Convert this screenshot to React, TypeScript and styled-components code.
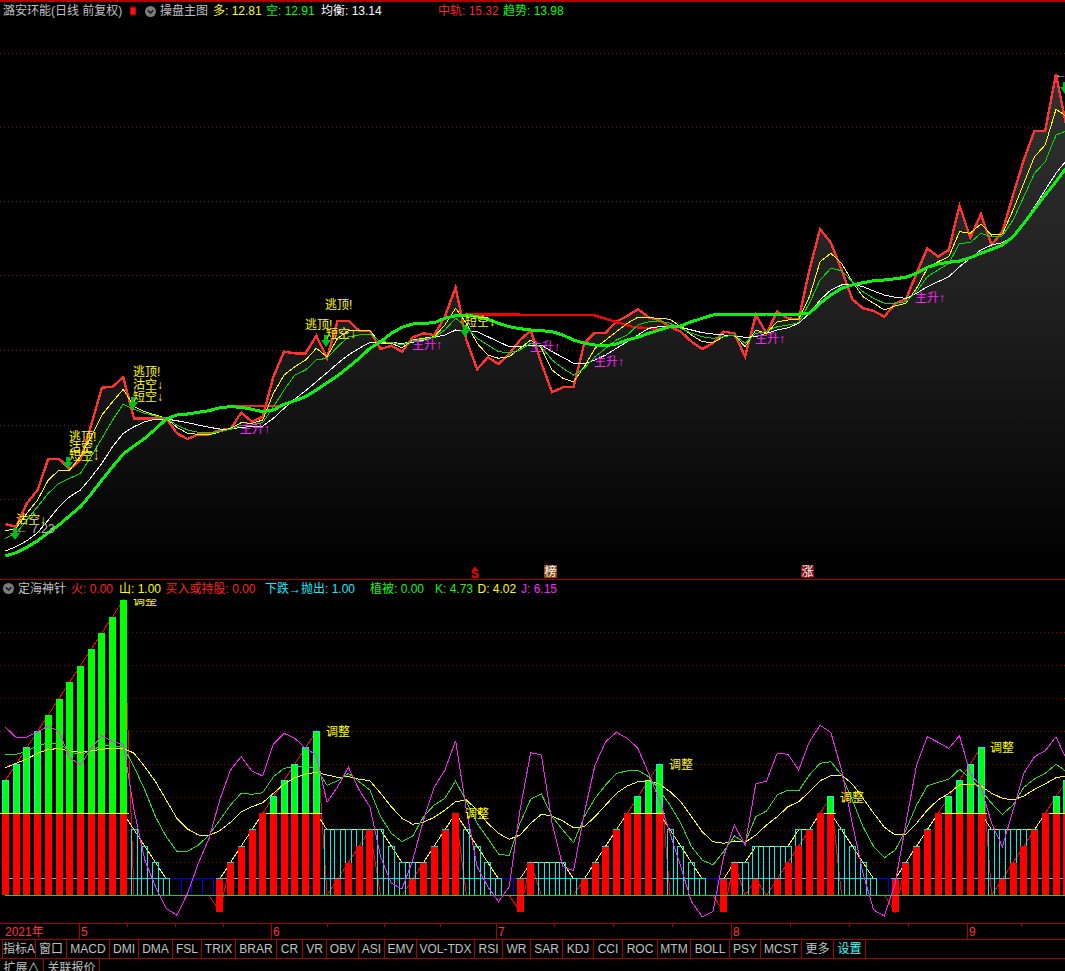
import styled, { createGlobalStyle } from "styled-components"

const GlobalStyle = createGlobalStyle`
html, body {
  margin: 0;
  padding: 0;
  background: #000;
}
* {
  box-sizing: border-box;
}
`

const FONT = `"Liberation Sans", "Noto Sans CJK SC", sans-serif`
const RULE = "#a80000"

const Screen = styled.div`
width: 1065px;
height: 971px;
overflow: hidden;
display: flex;
flex-direction: column;
background: #000;
border-top: 2px solid #b00000;
font-family: ${FONT};
font-size: 12px;
color: #c0c0c0;`
const Panel = styled.section<{ $ruled?: boolean }>`
display: flex;
flex-direction: column;
flex: 0 0 auto;
border-top: ${(p) => (p.$ruled ? `1px solid ${RULE}` : "none")};`
const Legend = styled.div<{ $h: number; $pb?: number }>`
height: ${(p) => p.$h}px;
padding-bottom: ${(p) => p.$pb ?? 0}px;
display: flex;
align-items: center;
white-space: nowrap;
overflow: hidden;`
const Reading = styled.span<{ $c: string; $w: number; $pad?: number }>`
flex: 0 0 ${(p) => p.$w}px;
width: ${(p) => p.$w}px;
padding-left: ${(p) => p.$pad ?? 0}px;
color: ${(p) => p.$c};
line-height: 14px;`
const Glyph = styled.svg<{ $ml: number; $mr: number }>`
flex: 0 0 auto;
margin-left: ${(p) => p.$ml}px;
margin-right: ${(p) => p.$mr}px;`
const Plot = styled.svg`
display: block;
flex: 0 0 auto;`
const Signal = styled.text`
font-family: ${FONT};
font-size: 12px;`
const Stamp = styled.text<{ $bold?: boolean }>`
font-family: ${FONT};
font-size: 12px;
font-weight: ${(p) => (p.$bold ? 700 : 400)};
text-anchor: middle;`
const Axis = styled.div`
height: 16px;
display: flex;
border-top: 1px solid ${RULE};`
const AxisCell = styled.div<{ $w: number; $major?: boolean }>`
flex: 0 0 ${(p) => p.$w}px;
height: ${(p) => (p.$major ? "15px" : "3px")};
border-left: 1px solid ${RULE};
padding-left: 1px;
color: #ff3232;
line-height: 16px;`
const YearCell = styled.div`
flex: 0 0 79px;
padding-left: 5px;
color: #ff3232;
line-height: 16px;`
const TabBar = styled.div`
height: 20px;
display: flex;
padding-left: 2px;
border-top: 1px solid ${RULE};
border-bottom: 1px solid ${RULE};`
const Tab = styled.div<{ $w: number; $active?: boolean }>`
flex: 0 0 ${(p) => p.$w}px;
border-right: 1px solid ${RULE};
color: ${(p) => (p.$active ? "#40ffff" : "#c0c0c0")};
text-align: center;
line-height: 18px;
white-space: nowrap;
overflow: hidden;
&:first-child {
  border-left: 1px solid ${RULE};
}`
const BottomBar = styled.div`
height: 12px;
display: flex;
overflow: hidden;`
const BottomTab = styled.div<{ $w: number }>`
flex: 0 0 ${(p) => p.$w}px;
border-right: 1px solid ${RULE};
padding-top: 1px;
text-align: center;
line-height: 16px;
white-space: nowrap;`

// y values read off the chart at 3x, each block with its own top offset
const seg = (offset: number, values: number[]) => values.map((v) => offset + v / 3)
const cx = (i: number) => 5.4 + 10.72 * i
const toPoints = (ys: number[]) => ys.map((y, i) => `${cx(i).toFixed(1)},${y.toFixed(1)}`).join(" ")

const closeLine = [
  ...seg(350, [522, 530, 460, 420, 326, 326, 358, 330, 225, 113, 110, 82, 205, 205, 205, 205, 250, 267, 253, 253, 240, 237, 188, 215, 200, 80]),
  ...seg(280, [215, 220, 220, 167, 234, 122, 122, 152, 152, 207, 197, 215, 172, 160, 165, 110, 22, 180, 268, 232, 252, 222, 180, 152, 250, 337, 322, 320, 190, 158, 158, 125, 108, 88, 112]),
  ...seg(60, [780, 800, 815, 845, 867, 850, 815, 820, 890, 765, 820, 755, 775, 778, 630, 508, 548, 630, 718, 745, 753, 770, 730, 718, 640, 565, 590, 570, 437, 533, 463, 555, 515, 405, 300, 212, 212, 42, 205]),
]
const fastLine = [
  ...seg(350, [543, 535, 490, 450, 390, 360, 360, 320, 260, 195, 155, 118, 170, 185, 195, 205, 232, 250, 253, 255, 245, 235, 218, 220, 210, 130]),
  ...seg(280, [285, 260, 240, 205, 230, 175, 152, 152, 152, 190, 190, 203, 180, 175, 170, 135, 85, 130, 190, 225, 235, 230, 205, 180, 205, 270, 295, 305, 260, 205, 180, 155, 130, 112, 113]),
  ...seg(60, [775, 778, 800, 825, 845, 848, 830, 825, 860, 810, 820, 785, 780, 778, 710, 605, 580, 610, 665, 710, 730, 750, 738, 730, 685, 625, 605, 590, 515, 520, 492, 525, 522, 450, 370, 290, 255, 148, 170]),
]
const midLine = [
  ...seg(350, [565, 550, 510, 470, 430, 400, 385, 370, 320, 265, 210, 162, 178, 190, 198, 205, 225, 240, 247, 248, 245, 238, 225, 225, 218, 170]),
  ...seg(280, [330, 285, 270, 240, 235, 200, 170, 165, 162, 185, 187, 195, 182, 178, 172, 150, 115, 140, 175, 195, 215, 218, 210, 190, 200, 240, 265, 285, 265, 230, 205, 180, 165, 135, 125]),
  ...seg(60, [783, 790, 805, 820, 830, 835, 830, 825, 850, 820, 815, 800, 795, 788, 730, 660, 625, 632, 665, 695, 715, 730, 730, 725, 695, 650, 630, 610, 550, 548, 520, 530, 528, 480, 410, 340, 305, 225, 212]),
]
const balanceLine = [
  ...seg(350, [603, 590, 572, 548, 510, 470, 440, 420, 382, 340, 290, 250, 230, 215, 208, 207, 212, 218, 225, 232, 237, 237, 232, 230, 228, 205]),
  ...seg(280, [385, 357, 332, 305, 278, 250, 225, 205, 187, 187, 188, 190, 187, 180, 172, 165, 150, 152, 155, 170, 185, 200, 200, 195, 195, 215, 232, 250, 252, 240, 225, 205, 185, 165, 145]),
  ...seg(60, [800, 800, 802, 810, 818, 822, 825, 828, 832, 830, 820, 810, 803, 790, 760, 720, 690, 675, 672, 680, 693, 705, 712, 715, 700, 680, 665, 650, 620, 595, 570, 555, 548, 530, 490, 440, 390, 340, 300]),
]
const trendLine = [
  ...seg(350, [618, 608, 592, 572, 548, 525, 497, 470, 432, 390, 350, 312, 288, 265, 237, 207, 195, 192, 187, 182, 173, 170, 172, 178, 185, 180]),
  ...seg(280, [373, 362, 350, 330, 308, 287, 262, 235, 205, 185, 160, 142, 132, 130, 128, 115, 107, 105, 110, 118, 130, 140, 146, 150, 152, 155, 165, 180, 190, 195, 197, 192, 180, 172, 160]),
  ...seg(60, [810, 800, 798, 785, 775, 765, 763, 763, 763, 763, 762, 762, 762, 762, 760, 730, 705, 685, 675, 668, 662, 660, 656, 652, 640, 622, 612, 607, 603, 593, 580, 568, 555, 530, 490, 448, 405, 365, 322]),
]

const kdjJ = seg(710, [
  52, 82, 82, 65, 48, 65, 143, 165, 115, 77, 95, 103, 300, 450, 530, 595, 616, 550, 460, 385, 270, 180, 140, 183, 198, 103, 70, 85, 115, 135, 277, 230, 172,
  240, 290, 440, 520, 537, 450, 330, 232, 180, 92, 300, 470, 530, 575, 530, 300, 128, 135, 340, 470, 482, 310, 165, 95, 67, 85, 115, 190, 270, 370, 470, 575, 620,
  605, 440, 345, 405, 222, 213, 130, 133, 180, 95, 46, 67, 180, 340, 490, 600, 618, 520, 340, 165, 80, 97, 115, 77, 190, 230, 340, 410, 300, 190, 140, 122, 80, 150,
])
const kdjK = seg(710, [
  133, 133, 125, 105, 100, 100, 125, 135, 120, 108, 107, 110, 170, 240, 320, 380, 424, 424, 405, 375, 330, 285, 250, 253, 248, 200, 175, 170, 170, 175, 226, 212, 190,
  215, 240, 320, 370, 395, 378, 320, 285, 265, 213, 275, 340, 385, 432, 437, 340, 267, 252, 320, 360, 398, 320, 265, 225, 190, 183, 181, 200, 240, 285, 340, 410, 450,
  465, 425, 378, 398, 320, 303, 255, 240, 243, 195, 160, 155, 195, 270, 350, 410, 443, 420, 360, 285, 228, 217, 208, 178, 205, 240, 280, 313, 285, 232, 207, 190, 163, 185,
])
const kdjD = seg(710, [
  173, 160, 147, 130, 118, 116, 123, 127, 123, 118, 115, 114, 130, 170, 215, 270, 325, 357, 375, 376, 362, 337, 305, 290, 278, 250, 222, 203, 192, 187, 195, 202, 200,
  208, 212, 250, 290, 325, 343, 337, 322, 300, 275, 270, 300, 340, 370, 388, 375, 340, 313, 318, 333, 353, 350, 320, 285, 250, 228, 215, 212, 222, 245, 275, 320, 365,
  395, 400, 393, 397, 375, 345, 320, 290, 275, 245, 212, 197, 195, 222, 265, 310, 352, 375, 372, 340, 300, 270, 250, 225, 222, 228, 250, 265, 270, 258, 238, 222, 203, 198,
])

interface Bar {
  red: number
  green?: number
  cyan?: number
  blue?: boolean
  below?: boolean
}
const r = (red: number): Bar => ({ red })
const g = (green: number): Bar => ({ red: 5, green })
const c = (cyan: number, red = 0): Bar => ({ red, cyan })
const BLUE: Bar = { red: 0, blue: true }
const DROP: Bar = { red: 0, below: true }

const bars: Bar[] = [
  g(7), g(8), g(9), g(10), g(11), g(12), g(13), g(14), g(15), g(16), g(17), g(18),
  c(4), c(3), c(2), c(1), BLUE, BLUE, BLUE, BLUE, DROP,
  r(2), r(3), r(4), r(5), g(6), g(7), g(8), g(9), g(10),
  c(4), c(4, 1), c(4, 2), c(4, 3), r(4), c(4), c(3), c(2), c(2, 1), r(2), r(3), r(4), r(5),
  c(4), c(3), c(2), c(1), BLUE, DROP, r(2), c(2), c(2), c(2), c(1), r(1), r(2), r(3), r(4), r(5), g(6), g(7), g(8),
  c(4), c(3), c(2), c(1), BLUE, DROP, c(2, 2), c(2), c(3, 1), c(3), c(3, 1), c(3, 2), c(4, 3), r(4), r(5), g(6),
  c(4), c(3), c(2), c(1), BLUE, DROP, r(2), r(3), r(4), r(5), g(6), g(7), g(8), g(9),
  c(4), c(4, 1), c(4, 2), c(4, 3), r(4), r(5), g(6), g(7),
]

const BASE_Y = 895.3
const levelY = (n: number) => BASE_Y - n * 16.4
const barX = (i: number) => Math.round(2 + 10.72 * i)

const stairLine = bars.map((b) => levelY(b.blue || b.below ? 1 : Math.min(5, Math.max(b.red, b.cyan ?? 0))))
const fillLine = bars.map((b) => levelY(b.below ? -1 : b.green ?? b.red))

const mainGrid = [53, 127, 201, 275, 350, 425, 499]
const lowerGrid = [632, 665, 698, 731, 764, 797, 830, 862]

const mainLabels = [
  { x: 16, y: 524, text: "沽空↓", fill: "#ffff00" },
  { x: 69, y: 441, text: "逃顶!", fill: "#ffff00" },
  { x: 69, y: 452, text: "沽空↓", fill: "#ffff00" },
  { x: 69, y: 460, text: "短空↓", fill: "#ffff00" },
  { x: 133, y: 376, text: "逃顶!", fill: "#ffff00" },
  { x: 133, y: 389, text: "沽空↓", fill: "#ffff00" },
  { x: 133, y: 401, text: "短空↓", fill: "#ffff00" },
  { x: 325, y: 309, text: "逃顶!", fill: "#ffff00" },
  { x: 305, y: 329, text: "逃顶!", fill: "#ffff00" },
  { x: 326, y: 338, text: "短空↓", fill: "#ffff00" },
  { x: 465, y: 326, text: "短空↓", fill: "#ffff00" },
  { x: 240, y: 433, text: "主升↑", fill: "#ff20ff" },
  { x: 412, y: 349, text: "主升↑", fill: "#ff20ff" },
  { x: 530, y: 351, text: "主升↑", fill: "#ff20ff" },
  { x: 594, y: 366, text: "主升↑", fill: "#ff20ff" },
  { x: 755, y: 343, text: "主升↑", fill: "#ff20ff" },
  { x: 915, y: 302, text: "主升↑", fill: "#ff20ff" },
]
const downArrows = [
  { x: 15, y: 528 },
  { x: 68, y: 457 },
  { x: 133, y: 397 },
  { x: 326, y: 335 },
  { x: 465, y: 325 },
  { x: 1065, y: 82 },
]
const adjustLabels = [
  { x: 326, y: 736 },
  { x: 465, y: 818 },
  { x: 669, y: 769 },
  { x: 840, y: 802 },
  { x: 990, y: 752 },
  { x: 133, y: 605 },
]

const axisCells = [
  { w: 48, label: "5" }, { w: 48 }, { w: 48 }, { w: 48 },
  { w: 56, label: "6" }, { w: 57 }, { w: 56 }, { w: 56 },
  { w: 58, label: "7" }, { w: 59 }, { w: 59 }, { w: 59 },
  { w: 59, label: "8" }, { w: 59 }, { w: 59 }, { w: 59 },
  { w: 54, label: "9" }, { w: 42 },
]
const tabs: [string, number][] = [
  ["指标A", 34], ["窗口", 31], ["MACD", 43], ["DMI", 29], ["DMA", 34], ["FSL", 29], ["TRIX", 34], ["BRAR", 41],
  ["CR", 26], ["VR", 24], ["OBV", 32], ["ASI", 26], ["EMV", 32], ["VOL-TDX", 58], ["RSI", 28], ["WR", 28],
  ["SAR", 32], ["KDJ", 31], ["CCI", 29], ["ROC", 35], ["MTM", 33], ["BOLL", 39], ["PSY", 31], ["MCST", 41], ["更多", 32],
]

const Chevron = ({ ml, mr }: { ml: number; mr: number }) => (
  <Glyph $ml={ml} $mr={mr} width="11" height="11" viewBox="0 0 11 11">
    <circle cx="5.5" cy="5.5" r="5.5" fill="#7c7c7c" />
    <path d="M2.8 4.2 L5.5 7 L8.2 4.2" fill="none" stroke="#1c1c1c" strokeWidth="1.6" />
  </Glyph>
)

const MainChart = () => (
  <Plot width="1065" height="559" viewBox="0 20 1065 559">
    <defs>
      <linearGradient id="closeFill" gradientUnits="userSpaceOnUse" x1="0" y1="60" x2="0" y2="575">
        <stop offset="0" stopColor="#333333" />
        <stop offset="0.5" stopColor="#1e1e1e" />
        <stop offset="1" stopColor="#000000" />
      </linearGradient>
    </defs>
    {mainGrid.map((y) => (
      <line key={y} x1="0" x2="1065" y1={y} y2={y} stroke="#701818" strokeDasharray="1 3" shapeRendering="crispEdges" />
    ))}
    <polygon points={`${toPoints(closeLine)} 1065,579 0,579 0,${closeLine[0]}`} fill="url(#closeFill)" />
    <g fill="none" shapeRendering="crispEdges">
      <polyline points={toPoints(closeLine)} stroke="#ff3232" strokeWidth="2.4" />
      <polyline points="230,405.7 280,405.7" stroke="#ff2020" strokeWidth="2" />
      <polyline points="465,314.5 593,315 633,327 660,329" stroke="#ff0000" strokeWidth="2.4" />
      <polyline points="723,313.5 797,314" stroke="#ff2020" strokeWidth="2" />
      <polyline points={toPoints(balanceLine)} stroke="#ffffff" />
      <polyline points={toPoints(fastLine)} stroke="#ffff00" />
      <polyline points={toPoints(midLine)} stroke="#00e000" />
      <polyline points={toPoints(trendLine)} stroke="#10f010" strokeWidth="3" />
    </g>
    {downArrows.map((a) => (
      <path
        key={a.x}
        d={`M${a.x - 2} ${a.y} h4 v5 h3 l-5 7 l-5 -7 h3 z`}
        fill="#00c020"
      />
    ))}
    {mainLabels.map((l) => (
      <Signal key={`${l.x}-${l.y}`} x={l.x} y={l.y} fill={l.fill}>{l.text}</Signal>
    ))}
    <Signal x="16" y="533" fill="#b8b8b8">← 7.23</Signal>
    <Signal x="1055" y="78" fill="#b8b8b8">←</Signal>
    <path d="M475 566.5 L478 571 H472 Z" fill="#ff0000" />
    <Stamp $bold x="475" y="578" fill="#ff0000">S</Stamp>
    <rect x="544" y="565" width="13" height="13" fill="#8a4a14" />
    <Stamp x="550.5" y="576" fill="#ffffff">榜</Stamp>
    <rect x="801" y="565" width="13" height="13" rx="2" fill="#860a12" />
    <Stamp x="807.5" y="576" fill="#ffffff">涨</Stamp>
  </Plot>
)

const OscillatorChart = () => (
  <Plot width="1065" height="324" viewBox="0 599 1065 324">
    {lowerGrid.map((y) => (
      <line key={y} x1="0" x2="1065" y1={y} y2={y} stroke="#900000" strokeDasharray="1 3" shapeRendering="crispEdges" />
    ))}
    <g fill="none" shapeRendering="crispEdges">
      <polyline points={toPoints(fillLine)} stroke="#ff0000" />
      <polyline points={toPoints(stairLine)} stroke="#ffff00" />
      <line x1="5" x2="1065" y1={levelY(1)} y2={levelY(1)} stroke="#00e0e0" />
    </g>
    <g shapeRendering="crispEdges">
      {bars.map((b, i) => {
        const x = barX(i)
        if (b.below) {
          return <rect key={i} x={x} y={levelY(1)} width="7" height={levelY(-1) - levelY(1)} fill="#ff0000" />
        }
        if (b.blue) {
          return <line key={i} x1={x + 7} x2={x + 7} y1={levelY(1)} y2={BASE_Y} stroke="#0000f0" />
        }
        return (
          <g key={i}>
            {b.cyan !== undefined && (
              <rect x={x + 0.5} y={levelY(b.cyan)} width="6" height={BASE_Y - levelY(b.cyan)} fill="none" stroke="#00f0f0" />
            )}
            {b.red > 0 && (
              <rect x={x} y={levelY(b.red)} width="7" height={BASE_Y - levelY(b.red)} fill="#ff0000" />
            )}
            {b.red > 1 && b.red < 5 && b.cyan === undefined && (
              <line x1={x} x2={x + 7} y1={levelY(b.red)} y2={levelY(b.red)} stroke="#00e0e0" />
            )}
            {b.green !== undefined && (
              <>
                {b.green <= 10 ? (
                  <rect x={x + 0.5} y={levelY(b.green)} width="6" height={levelY(5) - levelY(b.green)} fill="#00ff00" stroke="#00f0f0" />
                ) : (
                  <rect x={x} y={levelY(b.green)} width="7" height={levelY(5) - levelY(b.green)} fill="#00ff00" />
                )}
                <line x1={x - 2} x2={x + 9} y1={levelY(5)} y2={levelY(5)} stroke="#ffff00" />
              </>
            )}
          </g>
        )
      })}
      <line x1="170" x2="216" y1={levelY(1)} y2={levelY(1)} stroke="#0000f0" />
      <line x1="502" x2="516" y1={levelY(1)} y2={levelY(1)} stroke="#0000f0" />
      <line x1="706" x2="720" y1={levelY(1)} y2={levelY(1)} stroke="#0000f0" />
      <line x1="877" x2="891" y1={levelY(1)} y2={levelY(1)} stroke="#0000f0" />
      <line x1="5" x2="1065" y1={BASE_Y} y2={BASE_Y} stroke="#20d020" />
    </g>
    <g fill="none" shapeRendering="crispEdges">
      <polyline points={toPoints(kdjD)} stroke="#ffff00" />
      <polyline points={toPoints(kdjK)} stroke="#20e020" />
      <polyline points={toPoints(kdjJ)} stroke="#ff20ff" />
    </g>
    {adjustLabels.map((l) => (
      <Signal key={l.x} x={l.x} y={l.y} fill="#ffff00">调整</Signal>
    ))}
  </Plot>
)

const App = () => {
  return (
    <Screen>
      <GlobalStyle />
      <Panel>
        <Legend $h={18}>
          <Reading $c="#c0c0c0" $w={129} $pad={3}>潞安环能(日线 前复权)</Reading>
          <Glyph $ml={1} $mr={9} width="6" height="12" viewBox="0 0 6 12">
            <rect x="2.5" y="0" width="1" height="12" fill="#a00000" />
            <rect x="0" y="2" width="6" height="8" fill="#ff1010" stroke="#700000" />
          </Glyph>
          <Chevron ml={0} mr={4} />
          <Reading $c="#c0c0c0" $w={53}>操盘主图</Reading>
          <Reading $c="#ffff00" $w={53}>多: 12.81</Reading>
          <Reading $c="#00ff00" $w={55}>空: 12.91</Reading>
          <Reading $c="#ffffff" $w={117}>均衡: 13.14</Reading>
          <Reading $c="#ff2020" $w={65}>中轨: 15.32</Reading>
          <Reading $c="#00ff00" $w={70}>趋势: 13.98</Reading>
        </Legend>
        <MainChart />
      </Panel>
      <Panel $ruled>
        <Legend $h={19} $pb={2}>
          <Chevron ml={3} mr={4} />
          <Reading $c="#c0c0c0" $w={53}>定海神针</Reading>
          <Reading $c="#ff2020" $w={48}>火: 0.00</Reading>
          <Reading $c="#ffff00" $w={46.5}>山: 1.00</Reading>
          <Reading $c="#ff2020" $w={99.5}>买入或持股: 0.00</Reading>
          <Reading $c="#20e8ff" $w={105}>下跌→抛出: 1.00</Reading>
          <Reading $c="#20f020" $w={65}>植被: 0.00</Reading>
          <Reading $c="#20f020" $w={42.5}>K: 4.73</Reading>
          <Reading $c="#ffff00" $w={43.5}>D: 4.02</Reading>
          <Reading $c="#ff20ff" $w={50}>J: 6.15</Reading>
        </Legend>
        <OscillatorChart />
      </Panel>
      <Axis>
        <YearCell>2021年</YearCell>
        {axisCells.map((a, i) => (
          <AxisCell key={i} $w={a.w} $major={!!a.label}>{a.label}</AxisCell>
        ))}
      </Axis>
      <TabBar>
        {tabs.map(([name, w]) => (
          <Tab key={name} $w={w}>{name}</Tab>
        ))}
        <Tab $w={32} $active>设置</Tab>
      </TabBar>
      <BottomBar>
        <BottomTab $w={44}>扩展∧</BottomTab>
        <BottomTab $w={56}>关联报价</BottomTab>
      </BottomBar>
    </Screen>
  )
}

export default App
